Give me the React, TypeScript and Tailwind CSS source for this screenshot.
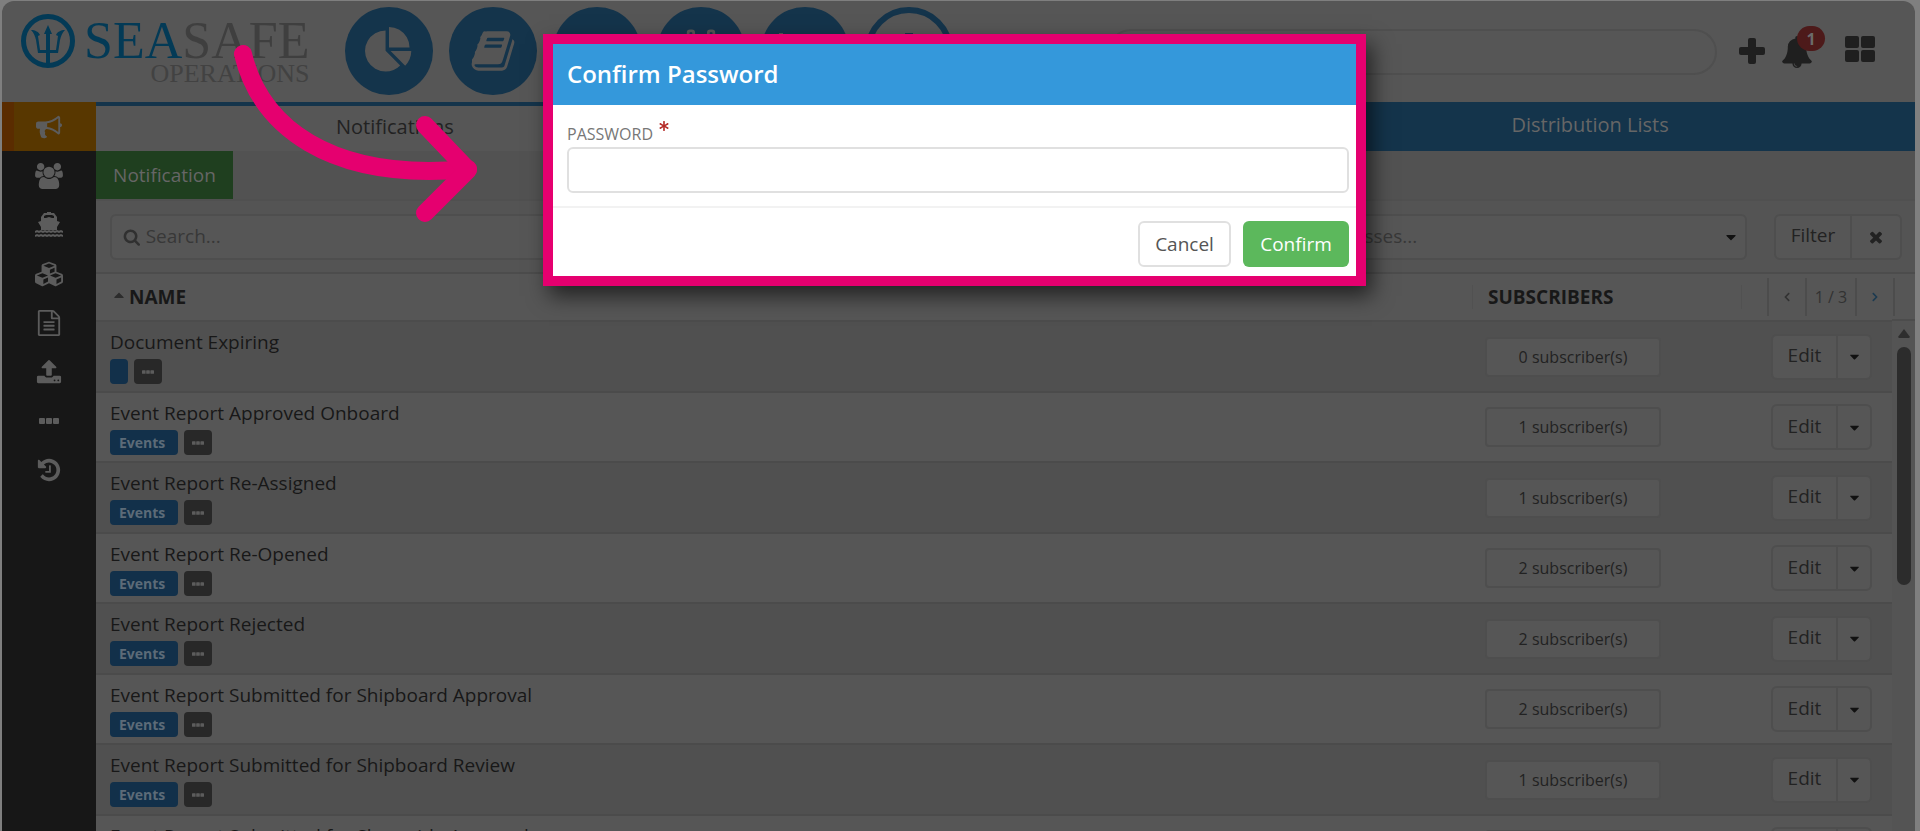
import type { ReactNode } from 'react'
import { FaAsterisk, FaCubes, FaCaretDown, FaCaretUp, FaChevronLeft, FaChevronRight } from 'react-icons/fa'

interface Row {
  name: string
  tag: string
  subscribers: number
}

const rows: Row[] = [
  { name: 'Document Expiring', tag: '', subscribers: 0 },
  { name: 'Event Report Approved Onboard', tag: 'Events', subscribers: 1 },
  { name: 'Event Report Re-Assigned', tag: 'Events', subscribers: 1 },
  { name: 'Event Report Re-Opened', tag: 'Events', subscribers: 2 },
  { name: 'Event Report Rejected', tag: 'Events', subscribers: 2 },
  { name: 'Event Report Submitted for Shipboard Approval', tag: 'Events', subscribers: 2 },
  { name: 'Event Report Submitted for Shipboard Review', tag: 'Events', subscribers: 1 },
  { name: 'Event Report Submitted for Shoreside Approval', tag: 'Events', subscribers: 1 },
]

const paths = {
  bullhorn:
    'M1664 640q53 0 90.5 37.5t37.5 90.5-37.5 90.5-90.5 37.5v384q0 52-38 90t-90 38q-417-347-812-380-58 19-91 66t-31 100.5 40 92.5q-20 33-23 65.5t6 58 33.5 55 48 50 61.5 50.5q-29 58-111.5 83t-168.5 11.5-132-55.5q-7-23-29.5-87.5t-32-94.5-23-89-15-101 3.5-98.5 22-110.5h-122q-66 0-113-47t-47-113v-192q0-66 47-113t113-47h480q435 0 896-384 52 0 90 38t38 90v384zm-128 604v-954q-394 302-768 343v270q377 42 768 341z',
  users:
    'M593 896q-162 5-265 128h-134q-82 0-138-40.5t-56-118.5q0-353 124-353 6 0 43.5 21t97.5 42.5 119 21.5q67 0 133-23-5 37-5 66 0 139 81 256zm1071 637q0 120-73 189.5t-194 69.5h-874q-121 0-194-69.5t-73-189.5q0-53 3.5-103.5t14-109 26.5-108.5 43-97.5 62-81 85.5-53.5 111.5-20q10 0 43 21.5t73 48 107 48 135 21.5 135-21.5 107-48 73-48 43-21.5q61 0 111.5 20t85.5 53.5 62 81 43 97.5 26.5 108.5 14 109 3.5 103.5zm-1024-1277q0 106-75 181t-181 75-181-75-75-181 75-181 181-75 181 75 75 181zm704 384q0 159-112.5 271.5t-271.5 112.5-271.5-112.5-112.5-271.5 112.5-271.5 271.5-112.5 271.5 112.5 112.5 271.5zm576 225q0 78-56 118.5t-138 40.5h-134q-103-123-265-128 81-117 81-256 0-29-5-66 66 23 133 23 59 0 119-21.5t97.5-42.5 43.5-21q124 0 124 353zm-128-609q0 106-75 181t-181 75-181-75-75-181 75-181 181-75 181 75 75 181z',
  file:
    'M1596 380q28 28 48 76t20 88v1152q0 40-28 68t-68 28h-1344q-40 0-68-28t-28-68v-1600q0-40 28-68t68-28h896q40 0 88 20t76 48zm-444-244v376h376q-10-29-22-41l-313-313q-12-12-41-22zm384 1528v-1024h-416q-40 0-68-28t-28-68v-416h-768v1536h1280zm-1024-864q0-14 9-23t23-9h704q14 0 23 9t9 23v64q0 14-9 23t-23 9h-704q-14 0-23-9t-9-23v-64zm736 224q14 0 23 9t9 23v64q0 14-9 23t-23 9h-704q-14 0-23-9t-9-23v-64q0-14 9-23t23-9h704zm0 256q14 0 23 9t9 23v64q0 14-9 23t-23 9h-704q-14 0-23-9t-9-23v-64q0-14 9-23t23-9h704z',
  upload:
    'M1344 1472q0-26-19-45t-45-19-45 19-19 45 19 45 45 19 45-19 19-45zm256 0q0-26-19-45t-45-19-45 19-19 45 19 45 45 19 45-19 19-45zm128-224v320q0 40-28 68t-68 28h-1472q-40 0-68-28t-28-68v-320q0-40 28-68t68-28h427q21 56 70.5 92t110.5 36h256q61 0 110.5-36t70.5-92h427q40 0 68 28t28 68zm-325-648q-17 40-59 40h-256v448q0 26-19 45t-45 19h-256q-26 0-45-19t-19-45v-448h-256q-42 0-59-40-17-39 14-69l448-448q18-19 45-19t45 19l448 448q31 30 14 69z',
  history:
    'M1664 896q0 156-61 298t-164 245-245 164-298 61q-172 0-327-72.5t-264-204.5q-7-10-6.5-22.5t8.5-20.5l137-138q10-9 25-9 16 2 23 12 73 95 179 147t225 52q104 0 198.5-40.5t163.5-109.5 109.5-163.5 40.5-198.5-40.5-198.5-109.5-163.5-163.5-109.5-198.5-40.5q-98 0-188 35.5t-160 101.5l137 138q31 30 14 69-17 40-59 40h-448q-26 0-45-19t-19-45v-448q0-42 40-59 39-17 69 14l130 129q107-101 244.5-156.5t284.5-55.5q156 0 298 61t245 164 164 245 61 298zm-640-288v448q0 14-9 23t-23 9h-320q-14 0-23-9t-9-23v-64q0-14 9-23t23-9h224v-352q0-14 9-23t23-9h64q14 0 23 9t9 23z',
  pie:
    'M768 890l546 546q-106 108-247.5 168t-298.5 60q-209 0-385.5-103t-279.5-279.5-103-385.5 103-385.5 279.5-279.5 385.5-103v762zm187 6h773q0 157-60 298.5t-168 247.5zm709-128h-768v-768q209 0 385.5 103t279.5 279.5 103 385.5z',
  book:
    'M1703 478q40 57 18 129l-275 906q-19 64-76.5 107.5t-122.5 43.5h-923q-77 0-148.5-53.5t-99.5-131.5q-24-67-2-127 0-4 3-27t4-37q1-8-3-21.5t-3-19.5q2-11 8-21t16.5-23.5 16.5-23.5q23-38 45-91.5t30-91.5q3-10 .5-30t-.5-28q3-11 17-28t17-23q21-36 42-92t25-90q1-9-2.5-32t.5-28q4-13 22-30.5t22-22.5q19-26 42.5-84.5t27.5-96.5q1-8-3-25.5t-2-26.5q2-8 9-18t18-23 17-21q8-12 16.5-30.5t15-35 16-36 19.5-32 26.5-23.5 36-11.5 47.5 5.5l-1 3q38-9 51-9h761q74 0 114 56t18 130l-274 906q-36 119-71.5 153.5t-128.5 34.5h-869q-27 0-38 15-11 16-1 43 24 70 144 70h923q29 0 56-15.5t35-41.5l300-987q7-22 5-57 38 15 59 43zm-1064 2q-4 13 2 22.5t20 9.5h608q13 0 25.5-9.5t16.5-22.5l21-64q4-13-2-22.5t-20-9.5h-608q-13 0-25.5 9.5t-16.5 22.5zm-83 256q-4 13 2 22.5t20 9.5h608q13 0 25.5-9.5t16.5-22.5l21-64q4-13-2-22.5t-20-9.5h-608q-13 0-25.5 9.5t-16.5 22.5z',
  bell:
    'M912 1696q0-16-16-16-59 0-101.5-42.5t-42.5-101.5q0-16-16-16t-16 16q0 73 51.5 124.5t124.5 51.5q16 0 16-16zm816-288q0 52-38 90t-90 38h-448q0 106-75 181t-181 75-181-75-75-181h-448q-52 0-90-38t-38-90q50-42 91-88t85-119.5 74.5-158.5 50-206 19.5-260q0-152 117-282.5t307-158.5q-8-19-8-39 0-40 28-68t68-28 68 28 28 68q0 20-8 39 190 28 307 158.5t117 282.5q0 139 19.5 260t50 206 74.5 158.5 85 119.5 91 88z',
  times:
    'M1490 1322q0 40-28 68l-136 136q-28 28-68 28t-68-28l-294-294-294 294q-28 28-68 28t-68-28l-136-136q-28-28-28-68t28-68l294-294-294-294q-28-28-28-68t28-68l136-136q28-28 68-28t68 28l294 294 294-294q28-28 68-28t68 28l136 136q28 28 28 68t-28 68l-294 294 294 294q28 28 28 68z',
  search:
    'M1216 832q0-185-131.5-316.5t-316.5-131.5-316.5 131.5-131.5 316.5 131.5 316.5 316.5 131.5 316.5-131.5 131.5-316.5zm512 832q0 52-38 90t-90 38q-54 0-90-38l-343-342q-179 124-399 124-143 0-273.5-55.5t-225-150-150-225-55.5-273.5 55.5-273.5 150-225 225-150 273.5-55.5 273.5 55.5 225 150 150 225 55.5 273.5q0 220-124 399l343 343q37 37 37 90z',
}

function Icon({ d, className, box = '0 0 1792 1792' }: { d: string; className: string; box?: string }) {
  return (
    <svg viewBox={box} className={className} fill="currentColor" aria-hidden="true">
      <path d={d} />
    </svg>
  )
}

function Dots({ className }: { className: string }) {
  return (
    <svg viewBox="0 0 20 6" className={className} fill="currentColor" aria-hidden="true">
      <rect width="6" height="6" rx="1" />
      <rect x="7" width="6" height="6" rx="1" />
      <rect x="14" width="6" height="6" rx="1" />
    </svg>
  )
}

function Ship() {
  return (
    <svg viewBox="0 0 28 26" className="h-[26px] w-[28px]" fill="currentColor" aria-hidden="true">
      <path d="M12 0h4v1h3l3 4v4l3 1-3 5v3H6v-3l-3-5 3-1V5l3-4h3zM9 4v2h2l3-1 3 1h2V4l-2-1h-6z" />
      <path
        d="M0 20l2-1 2 1 2-1 2 1 2-1 2 1 2-1 2 1 2-1 2 1 2-1 2 1 2-1 2 1M0 24l2-1 2 1 2-1 2 1 2-1 2 1 2-1 2 1 2-1 2 1 2-1 2 1 2-1 2 1"
        fill="none"
        stroke="currentColor"
        strokeWidth="2"
      />
    </svg>
  )
}

function Trident() {
  return (
    <svg viewBox="0 0 56 56" className="size-14 shrink-0" aria-hidden="true">
      <circle cx="28" cy="28" r="24.5" fill="none" stroke="#033a56" strokeWidth="5" />
      <g fill="#033a56">
        <path d="M28 12l4 9h-2v31h-4V21h-2z" />
        <path d="M11 17c4 0 8 2 9 5l-2 1 2 14h16l2-14-2-1c1-3 5-5 9-5-3 3-4 6-5 10l-2 13H18l-2-13c-1-4-2-7-5-10z" />
      </g>
    </svg>
  )
}

const sideItems: { label: string; icon: ReactNode }[] = [
  { label: 'Users', icon: <Icon d={paths.users} box="0 0 1920 1792" className="h-[26px] w-[28px]" /> },
  { label: 'Vessels', icon: <Ship /> },
  { label: 'Equipment', icon: <FaCubes className="h-[28px] w-[32px]" /> },
  { label: 'Documents', icon: <Icon d={paths.file} className="size-[26px]" /> },
  { label: 'Upload', icon: <Icon d={paths.upload} className="size-[26px]" /> },
  { label: 'More', icon: <Dots className="h-[6px] w-5" /> },
  { label: 'History', icon: <Icon d={paths.history} className="size-[26px]" /> },
]

const round = 'flex size-[88px] shrink-0 items-center justify-center rounded-full bg-[#14344b] text-[#555]'

function Header() {
  return (
    <header className="flex h-[101px] shrink-0 items-start justify-between">
      <div className="flex pt-[6px]">
        <a href="#" className="flex w-[326px] items-start gap-2 pl-[18px] pt-[6px] font-['Liberation_Serif',serif]">
          <Trident />
          <span className="flex flex-col items-end">
            <span className="text-[52px] leading-[56px] text-[#3f3f3f]">
              <span className="text-[#033a56]">SEA</span>SAFE
            </span>
            <span className="text-[26px] leading-[10px] text-[#424242]">OPERATIONS</span>
          </span>
        </a>
        <nav className="flex gap-4 pl-[17px]">
          <a href="#" aria-label="Dashboard" className={round}>
            <Icon d={paths.pie} className="size-[48px]" />
          </a>
          <a href="#" aria-label="Library" className={round}>
            <Icon d={paths.book} className="size-[46px]" />
          </a>
          <a href="#" aria-label="Forms" className={round} />
          <a href="#" aria-label="Calendar" className={round}>
            <svg viewBox="0 0 44 48" className="h-11 w-11" fill="none" stroke="currentColor" strokeWidth="3" aria-hidden="true">
              <path d="M7 8H2v38h40V8h-5M17 8h10" />
              <rect x="8" y="2" width="6" height="11" rx="2" />
              <rect x="30" y="2" width="6" height="11" rx="2" />
              <path d="M2 18h40" />
            </svg>
          </a>
          <a href="#" aria-label="Reports" className={round}>
            <svg viewBox="0 0 56 44" className="h-11 w-14" fill="none" stroke="currentColor" strokeWidth="4" aria-hidden="true">
              <path d="M4 4v36h48M14 34l10-10 8 6 14-12" />
            </svg>
          </a>
          <a
            href="#"
            aria-label="Administration"
            className="flex size-[88px] shrink-0 items-center justify-center rounded-full border-6 border-[#14344b] text-[#14344b]"
          >
            <svg viewBox="0 0 48 48" className="size-[48px]" fill="currentColor" aria-hidden="true">
              <path d="M20 6h8v14h14v8H28v14h-8V28H6v-8h14z" />
            </svg>
          </a>
        </nav>
      </div>
      <div className="flex items-start pt-[28px] text-[#1f1f1f]">
        <input
          type="text"
          aria-label="Global search"
          className="h-[46px] w-[609px] rounded-full border-2 border-[#4f4f4f] bg-[#565656] px-5"
        />
        <button type="button" aria-label="Add" className="ml-[22px] mt-[9px]">
          <svg viewBox="0 0 26 26" className="size-[26px]" fill="currentColor" aria-hidden="true">
            <rect x="9" width="8" height="26" rx="2" />
            <rect y="9" width="26" height="8" rx="2" />
          </svg>
        </button>
        <button type="button" aria-label="Alerts" className="relative ml-[16px] mt-[7px]">
          <Icon d={paths.bell} className="size-[32px]" />
          <span className="absolute -top-[10px] left-[16px] flex h-[25px] w-[28px] items-center justify-center rounded-full bg-[#4d1a1a] text-base font-bold text-[#6b6b6b]">
            1
          </span>
        </button>
        <button type="button" aria-label="Apps" className="ml-[32px] mr-[40px] mt-[7px]">
          <svg viewBox="0 0 30 26" className="h-[26px] w-[30px]" fill="currentColor" aria-hidden="true">
            <rect width="14" height="12" rx="2" />
            <rect x="16" width="14" height="12" rx="2" />
            <rect y="14" width="14" height="12" rx="2" />
            <rect x="16" y="14" width="14" height="12" rx="2" />
          </svg>
        </button>
      </div>
    </header>
  )
}

function Sidebar() {
  return (
    <nav className="flex w-[94px] shrink-0 flex-col bg-[#171717] text-[#5c5c5c]">
      <a
        href="#"
        aria-label="Notifications"
        className="flex h-[49px] items-center justify-center border-l-12 border-[#5a2c00] bg-[#583700] pr-3"
      >
        <Icon d={paths.bullhorn} className="size-[26px]" />
      </a>
      {sideItems.map((item) => (
        <a key={item.label} href="#" aria-label={item.label} className="flex h-[49px] items-center justify-center">
          {item.icon}
        </a>
      ))}
    </nav>
  )
}

function Tabs() {
  return (
    <div className="flex h-[49px] shrink-0 bg-[#14344b] text-xl text-[#666]">
      <button type="button" className="grow-33 basis-0 border-t-4 border-[#14344b] bg-[#565656] pb-1 text-[#222]">
        Notifications
      </button>
      <button type="button" className="grow-32 basis-0 pb-1">
        Templates
      </button>
      <button type="button" className="grow-35 basis-0 pr-2 pb-1">
        Distribution Lists
      </button>
    </div>
  )
}

function Filters() {
  return (
    <div className="flex h-[73px] shrink-0 items-center border-t-2 border-[#505050] bg-[#545454] pl-[14px] pr-[13px] text-[19px]">
      <label className="mr-4 flex h-[46px] flex-1 items-center gap-[5px] rounded-md border-2 border-[#4e4e4e] bg-[#565656] px-[11px] text-[#303030]">
        <Icon d={paths.search} className="size-[18px]" />
        <input
          type="text"
          aria-label="Search"
          placeholder="Search..."
          className="w-full bg-transparent outline-none placeholder:text-[#383838]"
        />
      </label>
      <div className="relative mr-[27px] w-[448px]">
        <select
          aria-label="Processes"
          className="h-[46px] w-full appearance-none rounded-md border-2 border-[#4e4e4e] bg-[#565656] px-[13px] text-[#383838]"
        >
          <option>Processes...</option>
        </select>
        <FaCaretDown className="pointer-events-none absolute right-[8px] top-[15px] size-4 text-[#111]" />
      </div>
      <div className="flex h-[46px] rounded-md border-2 border-[#4e4e4e] bg-[#565656] text-[#222]">
        <button type="button" className="w-[76px] border-r-2 border-[#4e4e4e] pb-[2px]">
          Filter
        </button>
        <button type="button" aria-label="Clear filter" className="flex w-[48px] items-center justify-center">
          <Icon d={paths.times} className="size-[18px]" />
        </button>
      </div>
    </div>
  )
}

function NotificationRow({ row }: { row: Row }) {
  return (
    <tr className="h-[70px] border-b-2 border-[#4b4b4b] odd:h-[71px] odd:bg-[#505050] even:bg-[#565656]">
      <td className="pl-[14px] align-top">
        <div className="pt-[6px] text-[19px] leading-7 text-[#181818]">{row.name}</div>
        <div className="mt-[3px] flex gap-[6px]">
          <span className="flex h-[25px] items-center rounded-sm bg-[#12304a] px-[9px] text-sm font-bold text-[#5c6b78]">
            {row.tag && <span className="pr-1">{row.tag}</span>}
          </span>
          <button type="button" aria-label="More tags" className="flex h-[25px] w-7 items-center justify-center rounded-sm bg-[#282828] text-[#5c5c5c]">
            <Dots className="h-[4px] w-3" />
          </button>
        </div>
      </td>
      <td className="pl-[13px]">
        <button type="button" className="block h-[40px] w-[176px] rounded-sm border-2 border-[#4e4e4e] bg-[#565656] text-base text-[#222]">
          {row.subscribers} subscriber(s)
        </button>
      </td>
      <td className="pl-[29px]">
        <div className="flex h-[46px] w-[101px] rounded-md border-2 border-[#4e4e4e] bg-[#565656] text-[19px] text-[#222]">
          <button type="button" className="flex-1 border-r-2 border-[#4e4e4e] pb-[2px]">
            Edit
          </button>
          <button type="button" aria-label="More actions" className="flex w-[32px] items-center justify-center text-[#111]">
            <FaCaretDown className="size-[15px]" />
          </button>
        </div>
      </td>
    </tr>
  )
}

function NotificationTable() {
  return (
    <div className="flex min-h-0 flex-1 overflow-hidden">
      <table className="w-full table-fixed border-collapse self-start text-left">
        <thead>
          <tr className="h-[48px] border-y-2 border-[#4c4c4c] bg-[#565656] text-[19px] text-[#181818]">
            <th className="pl-[15px] font-bold">
              <span className="flex items-center gap-[2px]">
                <FaCaretUp className="mb-1 size-4 text-[#2c2c2c]" />
                NAME
              </span>
            </th>
            <th className="w-[270px]">
              <span className="flex h-6 items-center border-x border-[#515151] pl-[15px]">SUBSCRIBERS</span>
            </th>
            <th className="w-[150px] font-normal">
              <span className="ml-[25px] flex h-[38px] text-[#323232]">
                <button type="button" aria-label="Previous page" className="flex w-[38px] items-center justify-center border-l-2 border-[#4c4c4c]">
                  <FaChevronLeft className="size-[10px]" />
                </button>
                <span className="flex w-[52px] items-center justify-center border-x-2 border-[#4c4c4c] text-base">1 / 3</span>
                <button type="button" aria-label="Next page" className="flex flex-1 items-center justify-center text-[#1c3a50]">
                  <FaChevronRight className="size-[10px]" />
                </button>
              </span>
            </th>
          </tr>
        </thead>
        <tbody>
          {rows.map((row) => (
            <NotificationRow key={row.name} row={row} />
          ))}
        </tbody>
      </table>
      <div className="flex w-[23px] shrink-0 flex-col items-center bg-[#545454]">
        <div className="flex h-[49px] w-full shrink-0 items-center border-y-2 border-[#4c4c4c] bg-[#565656] pl-px">
          <span className="h-[38px] border-l-2 border-[#4c4c4c]" />
        </div>
        <svg viewBox="0 0 12 9" className="mt-2 h-[9px] w-3" fill="#2e2e2e" aria-hidden="true">
          <path d="M6 0l6 8-1 1H1L0 8z" />
        </svg>
        <span className="mt-[9px] h-[238px] w-[14px] rounded-full bg-[#2c2c2c]" />
      </div>
    </div>
  )
}

function PasswordDialog() {
  return (
    <form
      role="dialog"
      aria-labelledby="dialog-title"
      className="w-[823px] border-10 border-[#e5006f] bg-white shadow-[6px_10px_20px_rgba(0,0,0,0.6)]"
    >
      <h2 id="dialog-title" className="h-[61px] bg-[#3498db] pl-[14px] text-2xl leading-[60px] font-semibold text-white">
        Confirm Password
      </h2>
      <div className="h-[103px] border-b-2 border-[#f2f2f2] pl-[14px] pr-[7px] pt-[14px]">
        <label htmlFor="password" className="flex h-[28px] gap-[6px] text-base leading-[30px] text-[#777]">
          PASSWORD
          <FaAsterisk className="mt-[2px] size-[10px] text-[#b52b27]" />
        </label>
        <input id="password" type="password" className="block h-[46px] w-full rounded-md border-2 border-[#e0e0e0] px-3" />
      </div>
      <div className="flex justify-end gap-3 pt-[13px] pr-[7px] pb-[9px] text-[19px]">
        <button type="button" className="h-[46px] w-[93px] rounded-md border-2 border-[#e0e0e0] text-[#555]">
          Cancel
        </button>
        <button type="submit" className="h-[46px] w-[106px] rounded-md bg-[#5cb85c] font-medium text-white">
          Confirm
        </button>
      </div>
    </form>
  )
}

export default function App() {
  return (
    <div className="h-screen bg-[#7f7f7f] pt-px pr-[5px] pl-[2px] font-['Open_Sans','Noto_Sans',sans-serif]">
      <div className="relative flex h-full flex-col overflow-hidden rounded-t-xl bg-[#565656]">
        <Header />
        <div className="flex min-h-0 flex-1">
          <Sidebar />
          <main className="flex min-w-0 flex-1 flex-col">
            <Tabs />
            <div className="h-[48px] shrink-0 bg-[#525252]">
              <button type="button" className="h-full w-[137px] bg-[#1f3f1f] text-[19px] text-[#666]">
                Notification
              </button>
            </div>
            <Filters />
            <NotificationTable />
          </main>
        </div>
        <div className="absolute inset-x-0 top-0 flex justify-center pt-[33px] pr-2">
          <PasswordDialog />
        </div>
        <svg
          viewBox="0 0 250 190"
          className="pointer-events-none absolute left-[226px] top-[39px] h-[190px] w-[250px]"
          fill="none"
          stroke="#e5006f"
          strokeWidth="18"
          strokeLinecap="round"
          strokeLinejoin="round"
          aria-hidden="true"
        >
          <path d="M15 14C32 85 100 142 240 129" />
          <path d="M197 85l43 45-43 43" />
        </svg>
      </div>
    </div>
  )
}
